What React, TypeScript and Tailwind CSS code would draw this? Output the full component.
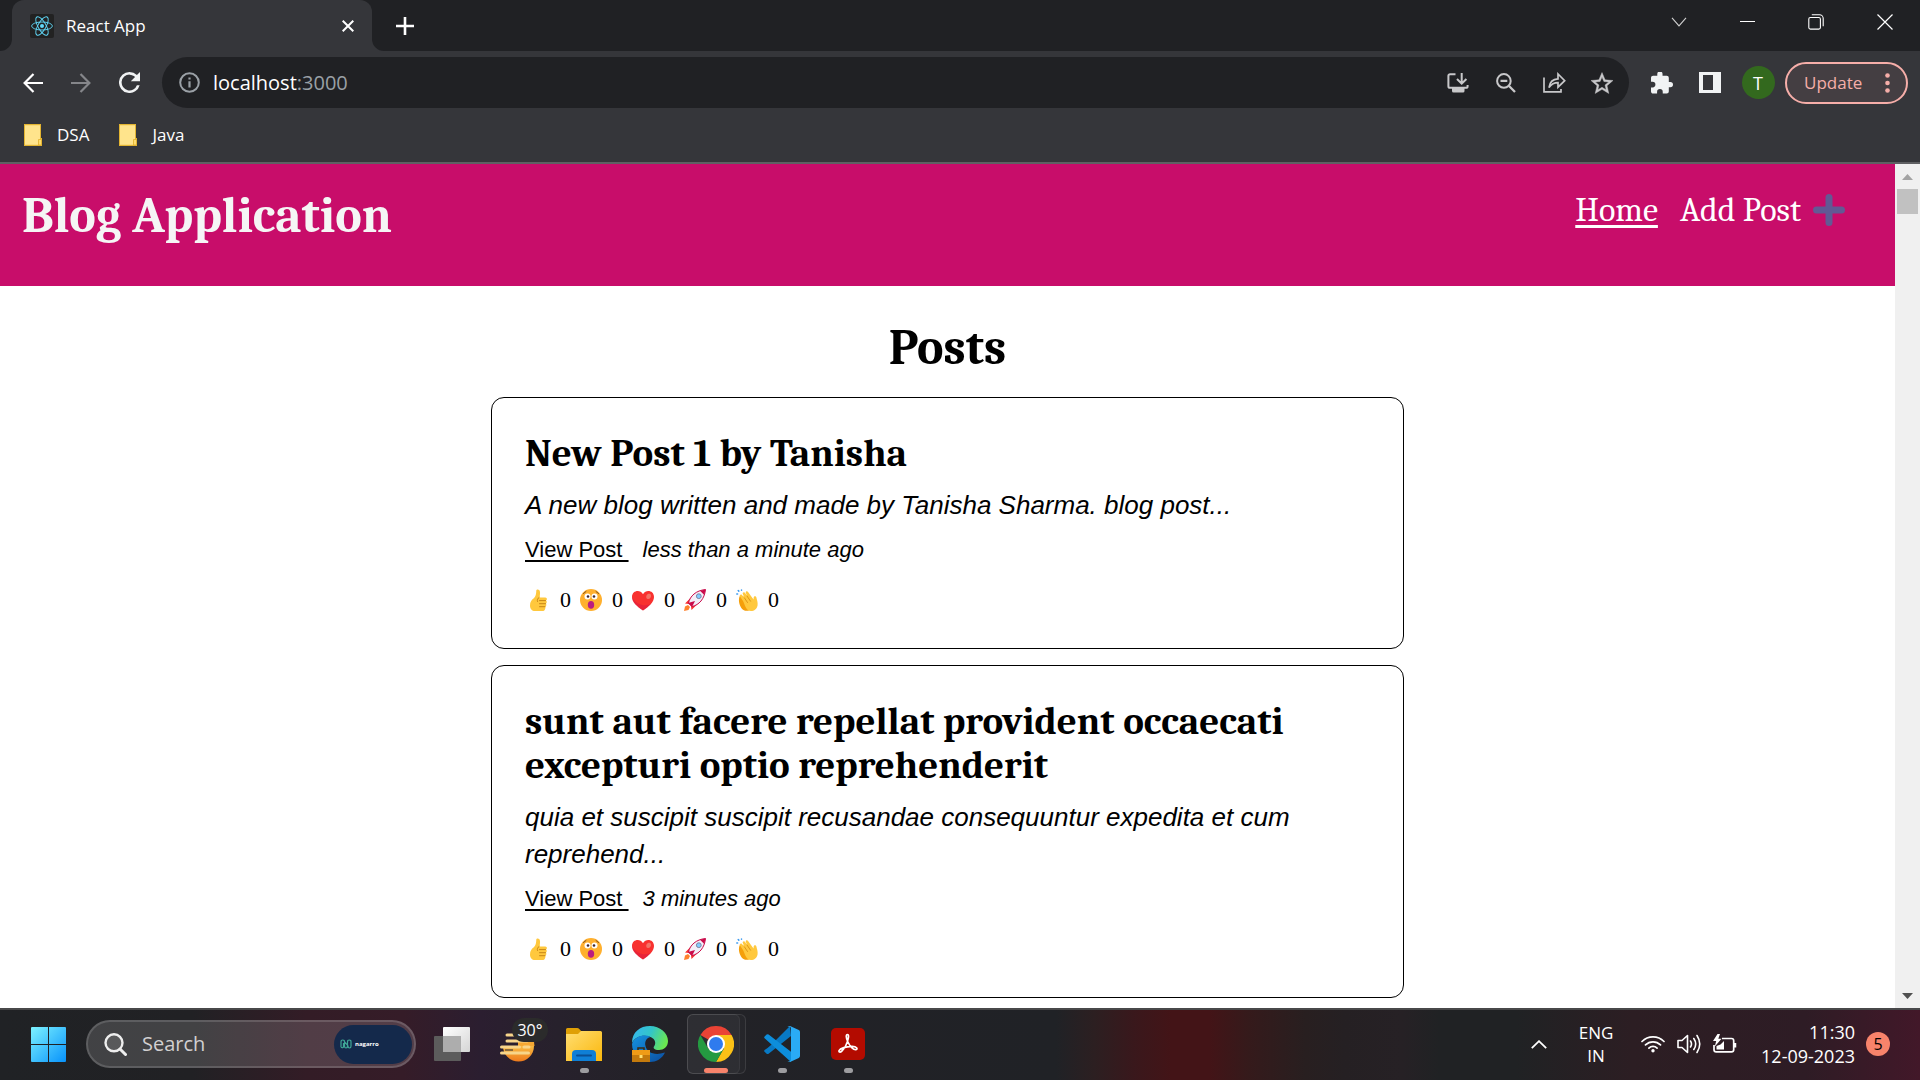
import type { ReactNode } from "react";

const UI = "font-['Segoe_UI','Open_Sans',sans-serif]";
const SERIF = "font-[Cambria,Caladea,'Liberation_Serif',serif]";

function ReactLogo() {
  return (
    <svg viewBox="0 0 24 24" className="size-6" fill="none" stroke="#61dafb" strokeWidth="0.9">
      <rect width="24" height="24" rx="2" fill="#222" stroke="none" />
      <circle cx="12" cy="12" r="2" fill="#61dafb" stroke="none" />
      <ellipse cx="12" cy="12" rx="10.4" ry="4" />
      <ellipse cx="12" cy="12" rx="10.4" ry="4" transform="rotate(60 12 12)" />
      <ellipse cx="12" cy="12" rx="10.4" ry="4" transform="rotate(120 12 12)" />
    </svg>
  );
}

function TabStrip() {
  return (
    <div className="flex h-[51px] shrink-0 items-stretch bg-[#202124] pl-3 text-white">
      <div className="relative flex w-[360px] items-center rounded-t-xl bg-[#35363a] pr-3 pl-[18px]">
        <svg viewBox="0 0 12 12" className="absolute bottom-0 -left-3 size-3" fill="#35363a"><path d="M12 0v12H0A12 12 0 0 0 12 0Z" /></svg>
        <svg viewBox="0 0 12 12" className="absolute -right-3 bottom-0 size-3" fill="#35363a"><path d="M0 0v12h12A12 12 0 0 1 0 0Z" /></svg>
        <ReactLogo />
        <span className="ml-3 flex-1 text-[17px] leading-6">React App</span>
        <button aria-label="Close tab" className="flex size-6 items-center justify-center">
          <svg viewBox="0 0 12 12" className="size-3" stroke="#fff" strokeWidth="2"><path d="m.7.7 10.6 10.6M11.3.7.7 11.3" /></svg>
        </button>
      </div>
      <button aria-label="New tab" className="ml-6 flex w-[18px] items-center justify-center">
        <svg viewBox="0 0 18 18" className="size-[18px]" stroke="#fff" strokeWidth="2.6"><path d="M9 0v18M0 9h18" /></svg>
      </button>
      <div className="ml-auto flex pb-2">
        <button aria-label="Search tabs" className="flex w-[68px] items-center justify-center">
          <svg viewBox="0 0 16 10" className="h-[10px] w-4" fill="none" stroke="#d0d0d0" strokeWidth="1.1"><path d="m1 .8 7 8 7-8" /></svg>
        </button>
        <button aria-label="Minimize" className="flex w-[68px] items-center justify-center">
          <span className="h-px w-[15px] bg-white" />
        </button>
        <button aria-label="Restore" className="flex w-[69px] items-center justify-center">
          <svg viewBox="0 0 16 16" className="size-4" fill="none" stroke="#fff" strokeWidth="1.1"><rect x=".8" y="3.5" width="11.6" height="11.6" rx="1.6" /><path d="M3.8.8h7.7a3.7 3.7 0 0 1 3.7 3.7v7.7" /></svg>
        </button>
        <button aria-label="Close window" className="flex w-[70px] items-center justify-center">
          <svg viewBox="0 0 16 16" className="size-4" stroke="#fff" strokeWidth="1.2"><path d="m.5.5 15 15M15.5.5l-15 15" /></svg>
        </button>
      </div>
    </div>
  );
}

function IconButton({ label, children }: { label: string; children: ReactNode }) {
  return (
    <button aria-label={label} className="flex h-12 w-12 items-center justify-center">
      {children}
    </button>
  );
}

function Toolbar() {
  return (
    <div className="flex h-[63px] shrink-0 items-center bg-[#35363a] pr-3 pl-[9px]">
      <IconButton label="Back">
        <svg viewBox="0 0 20 20" className="size-5" fill="none" stroke="#fff" strokeWidth="2.2"><path d="M20 10H2M10.5 1 1.6 10l8.9 9" /></svg>
      </IconButton>
      <IconButton label="Forward">
        <svg viewBox="0 0 20 20" className="size-5" fill="none" stroke="#85868a" strokeWidth="2.2"><path d="M0 10h18M9.5 1l8.9 9-8.9 9" /></svg>
      </IconButton>
      <IconButton label="Reload">
        <svg viewBox="4 4 16 16" className="size-[21px]" fill="#f1f3f4"><path d="M17.65 6.35A7.96 7.96 0 0 0 12 4a8 8 0 1 0 7.73 10h-2.08A6 6 0 1 1 12 6c1.66 0 3.14.69 4.22 1.78L13 11h7V4z" /></svg>
      </IconButton>
      <div className="ml-[9px] flex h-[51px] flex-1 items-center rounded-full bg-[#202124] pr-[3px] pl-[17px]">
        <svg viewBox="0 0 21 21" className="size-[21px]" fill="none" stroke="#9aa0a6" strokeWidth="2"><circle cx="10.5" cy="10.5" r="9.3" /><path d="M10.5 9.2v6.3M10.5 5.5v2.1" strokeWidth="2.2" /></svg>
        <div className="ml-[13px] flex-1 text-xl leading-7 text-white">localhost<span className="text-[#9aa0a6]">:3000</span></div>
        <IconButton label="Install app">
          <svg viewBox="0 0 22 20" className="h-5 w-[22px]" fill="none" stroke="#c8c8ca" strokeWidth="2"><path d="M8.5 1.2H3A1.6 1.6 0 0 0 1.4 2.8v10.4A1.6 1.6 0 0 0 3 14.8h16a1.6 1.6 0 0 0 1.6-1.6V12M14.7 0v10M10 6l4.7 4.7L19.4 6" /><path d="M5 14.5h12.5V18a1.5 1.5 0 0 1-1.5 1.5H6.500A1.5 1.5 0 0 1 5 18z" fill="#c8c8ca" stroke="none" /></svg>
        </IconButton>
        <IconButton label="Zoom out">
          <svg viewBox="0 0 20 20" className="size-5" fill="none" stroke="#c8c8ca" strokeWidth="2"><circle cx="7.9" cy="7.9" r="6.8" /><path d="M4.5 7.9h6.8M12.8 12.8l6.2 6.2" strokeWidth="2.3" /></svg>
        </IconButton>
        <IconButton label="Share">
          <svg viewBox="0 0 23 21" className="h-[21px] w-[23px]" fill="none" stroke="#c8c8ca" strokeWidth="1.7"><path d="M1 5.5v14.3h17V17M6 15.5c.7-5.5 4-8.3 9-8.6V2l6.7 6.7L15 15.2v-4.5c-4 0-6.6 1.5-9 4.8z" /></svg>
        </IconButton>
        <IconButton label="Bookmark this tab">
          <svg viewBox="2 2 20 19" className="size-[22px]" fill="#c8c8ca" stroke="#c8c8ca" strokeWidth=".4"><path d="m22 9.24-7.19-.62L12 2 9.19 8.63 2 9.24l5.46 4.73L5.82 21 12 17.27 18.18 21l-1.63-7.03zM12 15.4l-3.76 2.27 1-4.28-3.32-2.88 4.38-.38L12 6.1l1.71 4.04 4.38.38-3.32 2.88 1 4.28z" /></svg>
        </IconButton>
      </div>
      <div className="ml-[9px] flex items-center">
        <IconButton label="Extensions">
          <svg viewBox="2 1.5 21 21" className="size-[22px]" fill="#f1f3f4"><path d="M20.5 11H19V7a2 2 0 0 0-2-2h-4V3.5a2.5 2.5 0 0 0-5 0V5H4c-1.1 0-1.99.9-1.99 2v3.8H3.5a2.7 2.7 0 0 1 0 5.4H2V20c0 1.1.9 2 2 2h3.8v-1.5a2.7 2.7 0 0 1 5.4 0V22H17a2 2 0 0 0 2-2v-4h1.5a2.5 2.5 0 0 0 0-5z" /></svg>
        </IconButton>
        <IconButton label="Side panel">
          <svg viewBox="0 0 22 21" className="h-[21px] w-[22px]"><path fill="#f1f3f4" fillRule="evenodd" d="M0 0h22v21H0zM4 3v15h10V3z" /></svg>
        </IconButton>
        <IconButton label="Profile">
          <span className="flex size-[33px] items-center justify-center rounded-full bg-[#33691e] text-lg text-white">T</span>
        </IconButton>
      </div>
      <button className="ml-[3px] flex h-[42px] w-[123px] items-center rounded-full border-2 border-[#f6aea9] bg-[#443e42] pl-[17px] text-[17px] text-[#f6aea9]">
        Update
        <svg viewBox="0 0 5 20" className="mr-4 ml-auto h-5 w-[5px]" fill="#f6aea9"><circle cx="2.5" cy="2.5" r="2.3" /><circle cx="2.5" cy="10" r="2.3" /><circle cx="2.5" cy="17.5" r="2.3" /></svg>
      </button>
    </div>
  );
}

function Bookmark({ label }: { label: string }) {
  return (
    <a href="#" className="flex items-center gap-[15px] text-[17px] leading-6 text-white">
      <svg viewBox="0 0 18 22" className="h-[22px] w-[18px]">
        <path d="M0 0h17v14h1v8H0z" fill="#e3b532" /><path d="M1 1.2h15v19.6H1z" fill="#ffe48c" /><path d="M14.5 15.5h3V21h-3z" fill="#ffdc6e" stroke="#dfae2b" strokeWidth=".8" />
      </svg>
      {label}
    </a>
  );
}

function Emoji({ kind }: { kind: string }) {
  return (
    <svg viewBox="0 0 22 22" className="size-[22px]" role="img" aria-label={kind}>
      {kind === "thumbs up" && (
        <>
          <path d="M8.3 1.5C8.5 0 11.7-.1 12 3c.2 2.5-.4 4-.3 5.500h5.6c2 0 2 2.6.6 3 1.2.5 1.1 2.7-.2 3.1 1 .6.8 2.6-.5 2.9.6 1-.1 4.5-2.2 4.5H7C4 22 2 20 2 16.500c0-3.5 1.5-5.5 3.8-7.2C7.8 7.7 8.2 4.5 8.3 1.5z" fill="#ffc83d" />
          <path d="M17.5 11.6h-6M17.5 14.7h-6M17 17.7h-5.500M11 8.5c-1.5 1-2 2.5-1.5 4" stroke="#c88718" strokeWidth="1" fill="none" strokeLinecap="round" />
        </>
      )}
      {kind === "wow" && (
        <>
          <circle cx="11" cy="11" r="11" fill="#ffb02e" />
          <circle cx="7.5" cy="7.5" r="3" fill="#fff" /><circle cx="14.5" cy="7.5" r="3" fill="#fff" />
          <circle cx="8" cy="7.5" r="1.3" fill="#402a32" /><circle cx="14" cy="7.5" r="1.3" fill="#402a32" />
          <path d="M3.5 4.5 6 2.5M18.5 4.5 16 2.5" stroke="#70431f" strokeWidth=".9" strokeLinecap="round" />
          <ellipse cx="11" cy="15.8" rx="3.2" ry="3.9" fill="#bb1d80" />
        </>
      )}
      {kind === "heart" && (
        <>
          <path d="M11 21.5C5 17.5 0 13 0 8 0 1.5 8 0 11 5.2 14 0 22 1.5 22 8c0 5-5 9.5-11 13.5z" fill="#f8312f" />
          <path d="M14.5 6.5c1-2 4-2.3 4.5-.2.5 2-1.2 4-3 3.8-1.7-.2-2.2-2-1.5-3.6z" fill="#f37366" />
          <path d="M0 8c0 5 5 9.5 11 13.5 3-2 6-4.3 8.2-6.7C13 18 4 16 0 8z" fill="#ca0b4a" opacity=".35" />
        </>
      )}
      {kind === "rocket" && (
        <>
          <path d="M1 14.5 6.5 9l5 1.5-3 5zM7.5 21l5.5-5.500-1.500-5-5 3z" fill="#f8312f" />
          <path d="M0 22l1-4.500 3-1.500 2 2-1.500 3z" fill="#ff822d" />
          <path d="M4.5 14C6 7 12 1.5 21.5.5 20.500 10 15 16 8 17.500z" fill="#f3eef8" stroke="#ca0b4a" strokeWidth="1" />
          <path d="M16 1.7 21.5.5l-1.200 5.500z" fill="#ca0b4a" />
          <circle cx="14.8" cy="7.2" r="2.4" fill="#83cbff" stroke="#7d87a3" strokeWidth="1" />
          <path d="m4 14 4 4 3-6z" fill="#ca0b4a" />
        </>
      )}
      {kind === "clap" && (
        <>
          <path d="M.8 5h.8M2.2 1.5l.6.6M5.5.9v.4" stroke="#3f9cf0" strokeWidth="1.5" strokeLinecap="round" />
          <path d="M4 6.500C2 10 3 15 5 18.500c1.500 2.800 5 4 8 3L9 8z" fill="#f59f0a" />
          <path d="M7 12 4 7.500c-.8-1.500.9-2.700 2-1.500L8.500 9 6.800 5c-.7-1.700 1.300-2.500 2.200-1.200L11 7 9.800 3.800c-.5-1.500 1.500-2.200 2.300-.9l5.400 7.600.2-2.200c.2-1.600 2.400-1.500 2.700.1.400 2 1.600 5 1.200 7.800-.6 3.800-3.400 5.800-6.600 5.800C10 22 9 16 7 12z" fill="#ffc83d" />
          <path d="m8.500 9 3 4.500M11 7l3.500 5.200" stroke="#d38a12" strokeWidth=".8" strokeLinecap="round" />
        </>
      )}
    </svg>
  );
}

const reactions = ["thumbs up", "wow", "heart", "rocket", "clap"];

const posts = [
  { title: "New Post 1 by Tanisha", excerpt: "A new blog written and made by Tanisha Sharma. blog post...", age: "less than a minute ago" },
  { title: "sunt aut facere repellat provident occaecati excepturi optio reprehenderit", excerpt: "quia et suscipit suscipit recusandae consequuntur expedita et cum reprehend...", age: "3 minutes ago" },
];

function PostCard({ title, excerpt, age }: (typeof posts)[number]) {
  return (
    <article className="rounded-[13px] border border-black px-[33px] pt-[34px] pb-8 font-['Liberation_Sans',Arial,sans-serif] text-black">
      <h2 className="font-[Cambria,Caladea,'Liberation_Serif',serif] text-[39px] leading-[44px] font-bold">{title}</h2>
      <p className="mt-[11px] text-[26px] leading-[37px] italic">{excerpt}</p>
      <p className="mt-2 text-[22px] leading-9">
        <a href="#" className="whitespace-pre underline decoration-2 underline-offset-3">{"View Post "}</a>
        <span className="ml-[14px] italic">{age}</span>
      </p>
      <div className="mt-4 flex gap-[9px] pl-[3px] font-['Liberation_Serif',serif] text-[22px] leading-8">
        {reactions.map((kind) => (
          <button key={kind} className="flex items-center gap-[10px]">
            <Emoji kind={kind} />
            <span>0</span>
          </button>
        ))}
      </div>
    </article>
  );
}

function Page() {
  return (
    <div className="flex min-h-0 flex-1 overflow-hidden bg-white">
      <div className="min-w-0 flex-1 overflow-hidden">
        <header className={`flex h-[122px] justify-between bg-[#c80d6a] pr-[50px] pl-[22px] ${SERIF}`}>
          <h1 className="pt-[23px] text-[50px] leading-[58px] font-bold text-[#f5f5f5]">Blog Application</h1>
          <nav className="flex items-start gap-[22px] pt-[27px] text-[34px] leading-[38px] text-white">
            <a href="#" className="underline decoration-3 underline-offset-4">Home</a>
            <a href="#" className="flex items-center gap-3">
              Add Post
              <svg viewBox="0 0 32 32" className="size-8" stroke="#635994" strokeWidth="7" strokeLinecap="round"><path d="M16 3.5v25M3.5 16h25" /></svg>
            </a>
          </nav>
        </header>
        <main className="mx-auto w-[913px] max-w-full">
          <h2 className={`mt-[33px] mb-5 text-center text-[50px] leading-[58px] font-bold text-black ${SERIF}`}>Posts</h2>
          <div className="flex flex-col gap-4">
            {posts.map((post) => <PostCard key={post.title} {...post} />)}
          </div>
        </main>
      </div>
      <div className="flex w-[25px] shrink-0 flex-col items-center justify-between bg-[#f0f0f0]">
        <div className="flex w-full flex-col items-center">
          <svg viewBox="0 0 11 6" className="mt-[10px] h-[6px] w-[11px]" fill="#a3a3a3"><path d="M5.5 0 11 6H0z" /></svg>
          <div className="mt-[9px] h-[25px] w-[21px] bg-[#c1c1c1]" />
        </div>
        <svg viewBox="0 0 11 6" className="mb-[9px] h-[6px] w-[11px]" fill="#505050"><path d="M0 0h11L5.5 6z" /></svg>
      </div>
    </div>
  );
}

function TaskButton({ label, state, children }: { label: string; state?: string; children: ReactNode }) {
  return (
    <button aria-label={label} className="relative flex h-[70px] w-[66px] items-center justify-center">
      {state === "active" && (
        <>
          <span className="absolute top-[5px] left-1 h-[60px] w-[59px] rounded-md border border-white/10 bg-white/2" />
          <span className="absolute top-[5px] left-1 h-[60px] w-[53px] rounded-md border border-white/5 bg-white/4" />
        </>
      )}
      <span className="relative flex">{children}</span>
      {state === "open" && <span className="absolute bottom-[6px] h-[5px] w-[9px] rounded-full bg-[#9d9da0]" />}
      {state === "active" && <span className="absolute bottom-[6px] h-[5px] w-6 rounded-full bg-[#f7836b]" />}
    </button>
  );
}

function Taskbar() {
  return (
    <footer className="flex h-[72px] shrink-0 items-center border-t-2 border-[#48484a] bg-[linear-gradient(90deg,#202225_0%,#212124_10%,#331c26_16%,#351c28_21%,#2b1e30_25%,#27212c_29%,#222227_35%,#202226_55%,#2c1f21_57%,#39181c_59%,#431417_61%,#431417_63%,#351a1b_65%,#281f20_68%,#252023_70%,#262125_73%,#202224_75%,#202224_79%,#2c1e23_85%,#2e1c25_94%,#421829_100%)] pb-[2px] pl-[15px] text-white">
      <TaskButton label="Start">
        <svg viewBox="0 0 35 35" className="size-[35px]">
          <defs><linearGradient id="win" x1="0" y1="0" x2="1" y2="1"><stop offset="0" stopColor="#7df3ff" /><stop offset="1" stopColor="#0792fb" /></linearGradient></defs>
          <path fill="url(#win)" d="M1 0h16v17H0V1a1 1 0 0 1 1-1zm17 0h16a1 1 0 0 1 1 1v16H18zM0 18h17v17H1a1 1 0 0 1-1-1zm18 0h17v16a1 1 0 0 1-1 1H18z" />
        </svg>
      </TaskButton>
      <label className="ml-[5px] flex h-12 w-[330px] items-center rounded-full border-2 border-white/15 bg-white/15 pr-[2px] pl-4">
        <svg viewBox="0 0 23 23" className="size-[23px]" fill="none" stroke="#eee" strokeWidth="2.4"><circle cx="10" cy="9.8" r="8.5" fill="#fff" fillOpacity=".12" /><path d="m16 16 5.5 5.5" strokeWidth="3" strokeLinecap="round" /></svg>
        <input aria-label="Search" placeholder="Search" className="ml-[15px] w-0 min-w-0 flex-1 bg-transparent text-xl text-white outline-none placeholder:text-[#d2d0d1]" />
        <span className="flex h-[39px] w-[78px] items-center gap-[3px] rounded-full bg-[#14294b] pl-[6px] text-[6px] font-bold">
          <svg viewBox="0 0 12 10" className="h-[10px] w-3" fill="none" stroke="#3fa796" strokeWidth="1.2"><path d="M1 8V3q0-2 1.800-2T4.500 3v4q0 2 1.500 2t1.500-2V3q0-2 1.800-2T11 3v4q0 2-1.500 2T8 7L4 2M1 8q1 1.500 2.500 0V4" /></svg>
          nagarro
        </span>
      </label>
      <div className="ml-[3px] flex">
        <TaskButton label="Task view">
          <svg viewBox="0 0 36 34" className="h-[34px] w-9">
            <defs><linearGradient id="tv" x1="0" y1="0" x2="1" y2="1"><stop offset="0" stopColor="#fff" /><stop offset="1" stopColor="#d5d5d5" /></linearGradient></defs>
            <rect x="9" width="27" height="25" rx="1" fill="url(#tv)" /><rect y="9" width="27" height="25" rx="1" fill="#5c5c5c" /><path d="M9 9h18v16H9z" fill="#adadad" />
          </svg>
        </TaskButton>
        <TaskButton label="Weather">
          <svg viewBox="0 0 36 36" className="size-9">
            <defs><linearGradient id="sun" x1="0" y1="0" x2="0" y2="1"><stop offset="0" stopColor="#f8bb42" /><stop offset="1" stopColor="#ee7a1c" /></linearGradient></defs>
            <path d="M3 20h31a15.500 15.500 0 0 1-31 0z" fill="url(#sun)" />
            <path d="M18 6h8a15 15 0 0 1 8.500 14H18z" fill="#f5a833" />
            <path d="M7 9h8M7 15h20M1.5 21h18M24 21h5M1.5 27h27" stroke="#f7d58a" strokeWidth="3" strokeLinecap="round" />
            <path d="M5 24h8" stroke="#8c6a38" strokeWidth="2" />
          </svg>
          <span className="absolute -top-2 left-3 flex h-6 w-9 items-center justify-center rounded-full bg-[#2b2b2b] text-base">30°</span>
        </TaskButton>
        <TaskButton label="File Explorer" state="open">
          <svg viewBox="0 0 36 33" className="h-[33px] w-9">
            <defs><linearGradient id="fe" x1="0" y1="0" x2="1" y2="1"><stop offset="0" stopColor="#ffde72" /><stop offset="1" stopColor="#fbb70c" /></linearGradient></defs>
            <path d="M0 1.5Q0 0 1.5 0H11q1.5 0 2.500 1.2L15.500 3.500V10H0z" fill="#dfa006" />
            <path d="M0 6h12l3-3h19.500Q36 3 36 4.500V33H0z" fill="url(#fe)" />
            <path d="M6 33v-7q0-4 4-4h16q4 0 4 4v7z" fill="#0f7fd6" /><path d="M11 27.5h14" stroke="#0a4f94" strokeWidth="2" strokeLinecap="round" />
          </svg>
        </TaskButton>
        <TaskButton label="Microsoft Edge">
          <svg viewBox="0 0 36 36" className="size-9">
            <defs>
              <linearGradient id="eg" x1="0" y1=".2" x2="1" y2=".5"><stop offset="0" stopColor="#35b8f0" /><stop offset=".5" stopColor="#33c5c8" /><stop offset="1" stopColor="#6be84f" /></linearGradient>
              <linearGradient id="eb" x1="0" y1="0" x2="1" y2="1"><stop offset="0" stopColor="#1593e0" /><stop offset="1" stopColor="#0b4da0" /></linearGradient>
            </defs>
            <path d="M0 17C0 6 8 0 18 0s18 7 18 15c0 6-4.500 9-9 9-5 0-6-2-5-3.500 2-2.500 1.500-6-1-8C15 8 4 9 0 17z" fill="url(#eg)" />
            <path d="M0 18C3 9.500 13 8 18.500 11c-4.500 1-6 5-5 9 1.500 6.500 9 10 19.500 6.500C30 33 24 36 18 36 8 36 0 28 0 18z" fill="url(#eb)" />
            <path d="M0 24h18v12H0z" fill="#c47a0d" /><path d="M0 24h18v5H0z" fill="#f09c17" /><path d="M6 24v-2h6v2" fill="none" stroke="#3b2a10" strokeWidth="1.5" /><rect x="7.5" y="29" width="3" height="3" fill="#ffe071" />
          </svg>
        </TaskButton>
        <TaskButton label="Google Chrome" state="active">
          <svg viewBox="0 0 36 36" className="size-9">
            <path d="M18 18 2.41 9A18 18 0 0 1 33.59 9z" fill="#ea4335" /><path d="M18 9h15.59A18 18 0 0 1 18 36l7.8-13.5z" fill="#fbc116" /><path d="M2.41 9 10.2 22.5 18 27l7.8-4.5L18 36A18 18 0 0 1 2.41 9z" fill="#249a41" />
            <circle cx="18" cy="18" r="9" fill="#fff" /><circle cx="18" cy="18" r="7" fill="#2f7bee" />
          </svg>
        </TaskButton>
        <TaskButton label="Visual Studio Code" state="open">
          <svg viewBox="0 0 36 36" className="size-9">
            <path d="M26 0 6.5 19.5 3.5 22 .6 24q-.9 1 0 1.8l2 1.9q1 .8 2 0L27 10z" fill="#0879c4" />
            <path d="M.6 10.5 2.6 8.600q1-.8 2 0L27 25.700V36L.6 12.300q-.8-.9 0-1.800z" fill="#0d8edb" />
            <path d="M26 0l8.800 4.100Q36 4.700 36 6v24q0 1.300-1.200 1.900L26 36q-1.500.3-2.500-.8 3.500 1 3.500-1.700V2.500Q27 0 23.500.8 24.500-.4 26 0z" fill="#2aabf5" />
          </svg>
        </TaskButton>
        <TaskButton label="Adobe Acrobat" state="open">
          <svg viewBox="0 0 34 32" className="h-8 w-[34px]">
            <rect width="34" height="32" rx="5" fill="#b30b00" />
            <path d="M16.5 6.500c-1.800 0-1.500 3.500.4 7.500 2 4.300 5.500 8 8 7.700 2.300-.4 1-3.600-4.300-3.400-5.300.2-11.500 2-12.500 4.200-.6 1.600 1 2.300 2.700.6 3-3 5.300-7.800 6.300-12 .7-2.800.6-4.600-.6-4.600z" fill="none" stroke="#fff" strokeWidth="1.7" strokeLinejoin="round" />
          </svg>
        </TaskButton>
      </div>
      <div className="ml-auto flex h-full items-center pr-[30px]">
        <button aria-label="Show hidden icons" className="mr-[31px]">
          <svg viewBox="0 0 16 9" className="h-[9px] w-4" fill="none" stroke="#fff" strokeWidth="1.8"><path d="m.8 8.2 7.2-7 7.2 7" /></svg>
        </button>
        <button className="w-9 text-[17px] leading-[23px]">ENG IN</button>
        <button aria-label="Network, volume and battery" className="ml-[27px] flex items-center gap-3">
          <svg viewBox="0 0 24 18" className="h-[18px] w-6" fill="none" stroke="#fff" strokeWidth="1.7" strokeLinecap="round"><path d="M1 6.5a15.500 15.500 0 0 1 22 0M4.5 9.9a10.6 10.6 0 0 1 15 0M7.9 13.1a5.9 5.9 0 0 1 8.2 0" /><circle cx="12" cy="15.8" r="1.7" fill="#fff" stroke="none" /></svg>
          <svg viewBox="0 0 24 20" className="h-5 w-6" fill="none" stroke="#fff" strokeWidth="1.6" strokeLinecap="round" strokeLinejoin="round"><path d="M1 6.5h4L10.5 1.5v17L5 13.5H1zM13.5 7q2 3 0 6M16.8 4.5q3.8 5.5 0 11M20 1.5q5.5 8.5 0 17" /></svg>
          <svg viewBox="0 0 24 20" className="h-5 w-6" fill="none" stroke="#fff" strokeWidth="1.7"><path d="M9 4.5h9.500a2.200 2.200 0 0 1 2.200 2.200v9a2.200 2.200 0 0 1-2.200 2.200H3.200A2.200 2.200 0 0 1 1 15.700V11" /><path d="M22 9v4.500" strokeWidth="2.5" /><path d="M3.5 15.5V12l4-1.500L11 7v8.500z" fill="#fff" stroke="none" /><path d="M4.5 0 0 7h3.200L1.800 12.500 8.500 4.800H5.300L7 0z" fill="#fff" stroke="none" /></svg>
        </button>
        <button className="ml-6 text-right text-lg leading-6">
          <span className="block">11:30</span>
          <span className="block">12-09-2023</span>
        </button>
        <span className="ml-[11px] flex size-6 items-center justify-center rounded-full bg-[#f7836b] text-base text-black">5</span>
      </div>
    </footer>
  );
}

export default function App() {
  return (
    <div className={`flex h-screen flex-col overflow-hidden ${UI}`}>
      <TabStrip />
      <Toolbar />
      <div className="flex h-[50px] shrink-0 items-start gap-[30px] border-b-2 border-[#5f6063] bg-[#35363a] pt-[9px] pl-6">
        <Bookmark label="DSA" />
        <Bookmark label="Java" />
      </div>
      <Page />
      <Taskbar />
    </div>
  );
}
